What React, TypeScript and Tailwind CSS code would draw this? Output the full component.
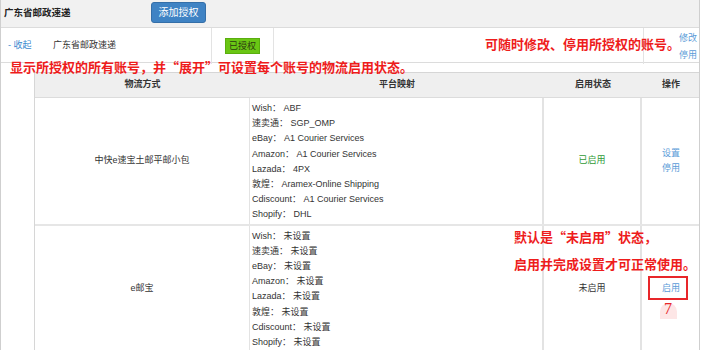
import React from 'react';

type Row = {
  name: string;
  maps: [string, string][];
  enabled: boolean;
};

const rows: Row[] = [
  {
    name: '中快e速宝土邮平邮小包',
    maps: [
      ['Wish', 'ABF'],
      ['速卖通', 'SGP_OMP'],
      ['eBay', 'A1 Courier Services'],
      ['Amazon', 'A1 Courier Services'],
      ['Lazada', '4PX'],
      ['敦煌', 'Aramex-Online Shipping'],
      ['Cdiscount', 'A1 Courier Services'],
      ['Shopify', 'DHL'],
    ],
    enabled: true,
  },
  {
    name: 'e邮宝',
    maps: [
      ['Wish', '未设置'],
      ['速卖通', '未设置'],
      ['eBay', '未设置'],
      ['Amazon', '未设置'],
      ['Lazada', '未设置'],
      ['敦煌', '未设置'],
      ['Cdiscount', '未设置'],
      ['Shopify', '未设置'],
    ],
    enabled: false,
  },
];

const font = 'font-["Liberation_Sans","Noto_Sans_CJK_SC",sans-serif]';
const note = 'absolute whitespace-nowrap text-[13px] leading-none font-semibold text-[#ee1c1c] font-["Noto_Sans_CJK_SC",sans-serif]';

const App: React.FC = () => {
  return (
    <div className={`relative w-[704px] h-[350px] overflow-hidden bg-white text-[9px] text-[#333] ${font}`}>
      <div className="w-[700px] border-l border-r border-[#cfcfcf]">
        {/* header */}
        <div className="h-[28px] flex items-center bg-[#f1f1f1] border-b border-[#dcdcdc]">
          <div className="w-[150px] pl-[3px] font-bold text-[9.5px] text-[#222]">广东省邮政速递</div>
          <button className="w-[55px] h-[21px] mt-[-2px] rounded-[3px] bg-[#3f83c4] border border-[#356fa8] text-white text-[10px]">
            添加授权
          </button>
        </div>

        {/* account row */}
        <div className="grid grid-cols-[211px_62px_370px_56px] h-[35px] border-b border-[#dcdcdc]">
          <div className="flex items-center border-r border-[#e3e3e3]">
            <span className="pl-[7px] w-[52px] text-[#3b8ad0]">- 收起</span>
            <span>广东省邮政速递</span>
          </div>
          <div className="flex items-center justify-center border-r border-[#e3e3e3]">
            <span className="px-[3px] py-[1px] bg-[#6ac614] border border-[#5aae0e] text-[#2a3a10] leading-[12px]">已授权</span>
          </div>
          <div className="border-r border-[#e3e3e3]" />
          <div className="flex flex-col items-end justify-center pr-[3px] pt-[2px] text-[#5a9bd8] leading-[17px]">
            <span>修改</span>
            <span>停用</span>
          </div>
        </div>

        {/* inner table */}
        <div className="mt-[9px] ml-[33px] border-l border-t border-[#d6d6d6]">
          <div className="grid grid-cols-[215px_294px_98px_58px] h-[25px] items-center bg-[#efefef] border-b border-[#dcdcdc] font-bold text-center">
            <div>物流方式</div>
            <div>平台映射</div>
            <div>启用状态</div>
            <div>操作</div>
          </div>
          {rows.map((r) => (
            <div key={r.name} className="grid grid-cols-[215px_294px_98px_58px] border-b-2 border-[#e6e6e6]">
              <div className="flex items-center justify-center border-r border-[#e3e3e3]">{r.name}</div>
              <div className="pl-[2px] pt-[3px] pb-[1px] border-r-2 border-[#e3e3e3] leading-[15.2px]">
                {r.maps.map(([k, v]) => (
                  <div key={k}>
                    {k}：&nbsp;{v}
                  </div>
                ))}
              </div>
              <div className={`flex items-center justify-center border-r-2 border-[#e3e3e3] ${r.enabled ? 'text-[#2f9a35]' : ''}`}>
                {r.enabled ? '已启用' : '未启用'}
              </div>
              <div className="flex flex-col items-center justify-center text-[#5a9bd8] leading-[15px]">
                {r.enabled ? (
                  <>
                    <span>设置</span>
                    <span>停用</span>
                  </>
                ) : (
                  <span>启用</span>
                )}
              </div>
            </div>
          ))}
        </div>
      </div>

      {/* annotations */}
      <div className={`${note} left-[485px] top-[37px]`}>可随时修改、停用所授权的账号。</div>
      <div className={`${note} left-[10px] top-[60px]`}>显示所授权的所有账号，并“展开”可设置每个账号的物流启用状态。</div>
      <div className={`${note} left-[514px] top-[230px]`}>默认是“未启用”状态，</div>
      <div className={`${note} left-[514px] top-[257px]`}>启用并完成设置才可正常使用。</div>
      <div className="absolute left-[648px] top-[276px] w-[40px] h-[24px] border-2 border-[#e8262a]" />
      <div className="absolute left-[660px] top-[303px] w-[17px] h-[16px] rounded-t-full bg-[#fde6e6]" />
      <div className='absolute left-[664px] top-[301px] text-[16px] leading-none text-[#e8262a] font-["Liberation_Serif",serif]'>7</div>
    </div>
  );
};

export default App;
